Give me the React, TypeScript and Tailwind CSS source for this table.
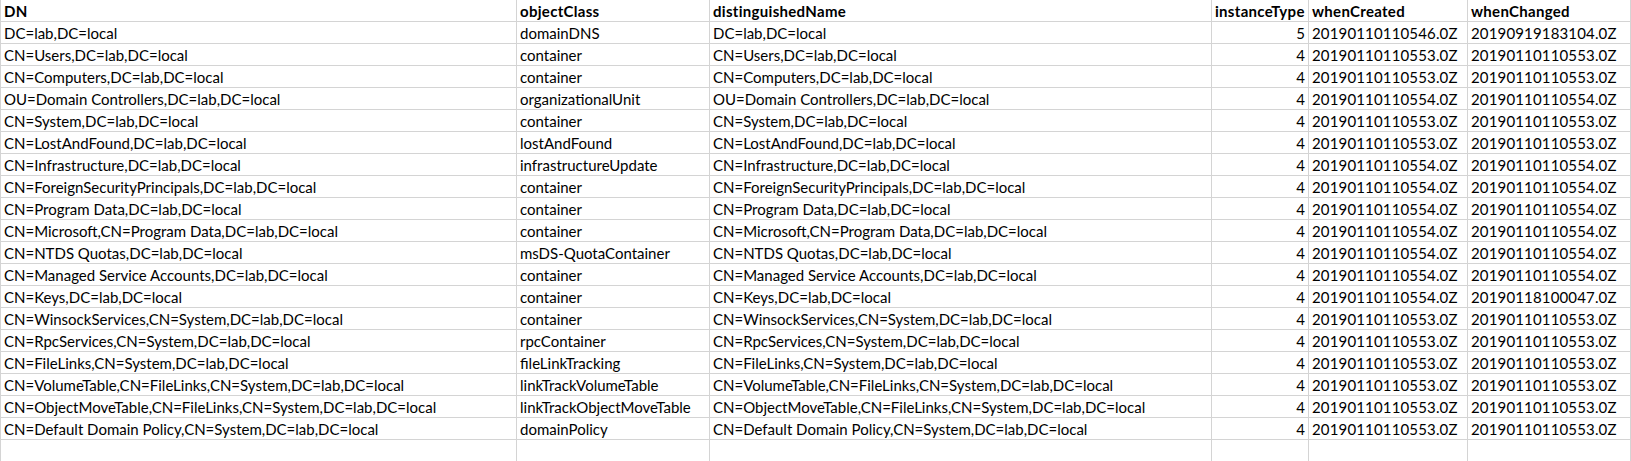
const headers = ["DN", "objectClass", "distinguishedName", "instanceType", "whenCreated", "whenChanged"];

const rows: [string, string, string, number, string, string][] = [
  ["DC=lab,DC=local", "domainDNS", "DC=lab,DC=local", 5, "20190110110546.0Z", "20190919183104.0Z"],
  ["CN=Users,DC=lab,DC=local", "container", "CN=Users,DC=lab,DC=local", 4, "20190110110553.0Z", "20190110110553.0Z"],
  ["CN=Computers,DC=lab,DC=local", "container", "CN=Computers,DC=lab,DC=local", 4, "20190110110553.0Z", "20190110110553.0Z"],
  ["OU=Domain Controllers,DC=lab,DC=local", "organizationalUnit", "OU=Domain Controllers,DC=lab,DC=local", 4, "20190110110554.0Z", "20190110110554.0Z"],
  ["CN=System,DC=lab,DC=local", "container", "CN=System,DC=lab,DC=local", 4, "20190110110553.0Z", "20190110110553.0Z"],
  ["CN=LostAndFound,DC=lab,DC=local", "lostAndFound", "CN=LostAndFound,DC=lab,DC=local", 4, "20190110110553.0Z", "20190110110553.0Z"],
  ["CN=Infrastructure,DC=lab,DC=local", "infrastructureUpdate", "CN=Infrastructure,DC=lab,DC=local", 4, "20190110110554.0Z", "20190110110554.0Z"],
  ["CN=ForeignSecurityPrincipals,DC=lab,DC=local", "container", "CN=ForeignSecurityPrincipals,DC=lab,DC=local", 4, "20190110110554.0Z", "20190110110554.0Z"],
  ["CN=Program Data,DC=lab,DC=local", "container", "CN=Program Data,DC=lab,DC=local", 4, "20190110110554.0Z", "20190110110554.0Z"],
  ["CN=Microsoft,CN=Program Data,DC=lab,DC=local", "container", "CN=Microsoft,CN=Program Data,DC=lab,DC=local", 4, "20190110110554.0Z", "20190110110554.0Z"],
  ["CN=NTDS Quotas,DC=lab,DC=local", "msDS-QuotaContainer", "CN=NTDS Quotas,DC=lab,DC=local", 4, "20190110110554.0Z", "20190110110554.0Z"],
  ["CN=Managed Service Accounts,DC=lab,DC=local", "container", "CN=Managed Service Accounts,DC=lab,DC=local", 4, "20190110110554.0Z", "20190110110554.0Z"],
  ["CN=Keys,DC=lab,DC=local", "container", "CN=Keys,DC=lab,DC=local", 4, "20190110110554.0Z", "20190118100047.0Z"],
  ["CN=WinsockServices,CN=System,DC=lab,DC=local", "container", "CN=WinsockServices,CN=System,DC=lab,DC=local", 4, "20190110110553.0Z", "20190110110553.0Z"],
  ["CN=RpcServices,CN=System,DC=lab,DC=local", "rpcContainer", "CN=RpcServices,CN=System,DC=lab,DC=local", 4, "20190110110553.0Z", "20190110110553.0Z"],
  ["CN=FileLinks,CN=System,DC=lab,DC=local", "fileLinkTracking", "CN=FileLinks,CN=System,DC=lab,DC=local", 4, "20190110110553.0Z", "20190110110553.0Z"],
  ["CN=VolumeTable,CN=FileLinks,CN=System,DC=lab,DC=local", "linkTrackVolumeTable", "CN=VolumeTable,CN=FileLinks,CN=System,DC=lab,DC=local", 4, "20190110110553.0Z", "20190110110553.0Z"],
  ["CN=ObjectMoveTable,CN=FileLinks,CN=System,DC=lab,DC=local", "linkTrackObjectMoveTable", "CN=ObjectMoveTable,CN=FileLinks,CN=System,DC=lab,DC=local", 4, "20190110110553.0Z", "20190110110553.0Z"],
  ["CN=Default Domain Policy,CN=System,DC=lab,DC=local", "domainPolicy", "CN=Default Domain Policy,CN=System,DC=lab,DC=local", 4, "20190110110553.0Z", "20190110110553.0Z"],
];

// cell: 21px of content plus a 1px gridline at the bottom and right
const cell = "h-[22px] border-r border-b border-[#d4d4d4] px-[3px] pt-[2px] leading-[19px] whitespace-nowrap overflow-hidden";
// timestamps are a touch wider in the sheet font than in Lato
const stamp = `${cell} tracking-[0.15px]`;

export default function App() {
  return (
    <div className="h-[461px] w-[1631px] overflow-hidden bg-white font-['Lato','Liberation_Sans',sans-serif] text-[15px] text-black">
      <div className="grid grid-cols-[516px_193px_502px_97px_159px_163px] border-l border-[#d4d4d4]">
        {headers.map((h) => (
          <div key={h} className={`${cell} font-bold tracking-[0.3px]`}>
            {h}
          </div>
        ))}

        {rows.map((r) => (
          <div key={r[0]} className="contents">
            <div className={cell}>{r[0]}</div>
            <div className={cell}>{r[1]}</div>
            <div className={cell}>{r[2]}</div>
            <div className={`${cell} text-right`}>{r[3]}</div>
            <div className={stamp}>{r[4]}</div>
            <div className={stamp}>{r[5]}</div>
          </div>
        ))}

        {/* empty trailing row */}
        {headers.map((h) => (
          <div key={`empty-${h}`} className={cell} />
        ))}
      </div>
    </div>
  );
}
